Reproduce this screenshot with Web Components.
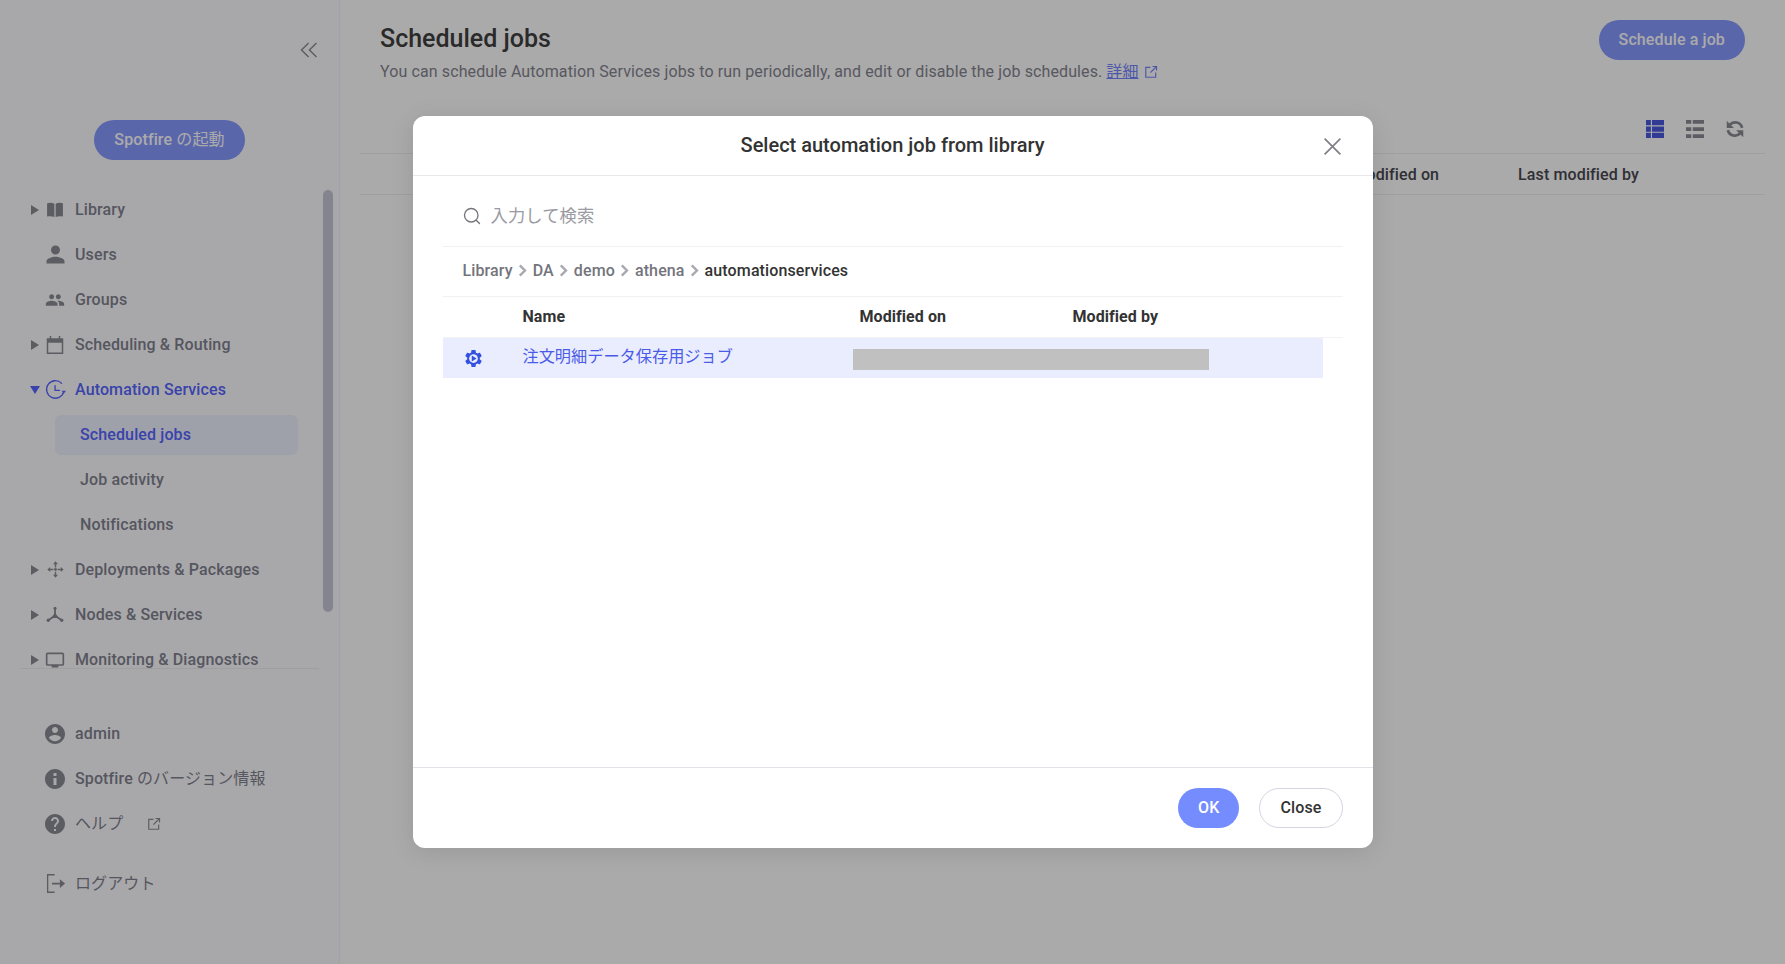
<!DOCTYPE html>
<html lang="ja">
<head>
<meta charset="utf-8">
<title>Scheduled jobs</title>
<style>
  html, body { margin: 0; height: 100%; }
  body {
    font: 16px/20px Roboto, "Noto Sans CJK JP", sans-serif;
    letter-spacing: .12px;
    background: #fff;
    overflow: hidden;
  }
</style>
</head>
<body>
<app-shell>
  <side-bar slot="side"></side-bar>
  <scheduled-jobs slot="main"></scheduled-jobs>
  <job-dialog slot="dialog"></job-dialog>
</app-shell>

<script>
// all the icons, drawn on a 24x24 box
const ICONS = {
  book: '<path d="M2.500 4c3-1 6.200-.9 8.700.5v16c-2.500-1.200-5.700-1.300-8.700-.6zM12.800 4.500c2.500-1.400 5.700-1.500 8.700-.5v15.900c-3-.7-6.200-.6-8.700.6z"/>',
  person: '<path d="M12 12c2.21 0 4-1.79 4-4s-1.79-4-4-4-4 1.79-4 4 1.79 4 4 4zm0 2c-2.67 0-8 1.34-8 4v2h16v-2c0-2.66-5.33-4-8-4z"/>',
  group: '<path d="M16 11c1.66 0 2.99-1.34 2.99-3S17.66 5 16 5s-3 1.34-3 3 1.34 3 3 3zm-8 0c1.66 0 2.99-1.34 2.99-3S9.66 5 8 5 5 6.34 5 8s1.34 3 3 3zm0 2c-2.33 0-7 1.17-7 3.5V19h14v-2.5c0-2.33-4.67-3.5-7-3.5zm8 0c-.29 0-.62.02-.97.05 1.16.84 1.97 1.97 1.97 3.45V19h6v-2.5c0-2.33-4.67-3.5-7-3.5z"/>',
  calendar: '<path d="M5 0h2v3h10V0h2v3h4v21H1V3h4zM3 9v13h18V9z"/>',
  clock: '<g fill="none" stroke="currentColor" stroke-width="1.500" stroke-linecap="round"><path d="M21.500 14.500A10 10 0 1 1 19 5"/><path d="M11.500 7.500v5.500h5"/></g><path d="M19 13.500h5l-2.500 3.200z"/>',
  move: '<path d="M12 .5l3.500 4h-2.500V9h-2V4.500H8.500zM12 23.500l-3.500-4H11V15h2v4.500h2.500zM.5 12l4-3.500V11H9v2H4.500v2.500zM23.500 12l-4 3.500V13H15v-2h4.500V8.500z"/><circle cx="12" cy="12" r="2"/>',
  nodes: '<g stroke="currentColor" stroke-width="2.400" fill="none"><path d="M12 3v9M12 13L3 19M12 13l9 6"/></g><circle cx="12" cy="3" r="2"/><circle cx="3" cy="19" r="2.200"/><circle cx="21" cy="19" r="2.200"/><path d="M12 8.500l5 7.500H7z"/>',
  monitor: '<path d="M3 3h18a2 2 0 0 1 2 2v12a2 2 0 0 1-2 2h-5v2H8v-2H3a2 2 0 0 1-2-2V5a2 2 0 0 1 2-2zm0 2v12h18V5z"/>',
  account: '<path d="M12 2C6.48 2 2 6.48 2 12s4.48 10 10 10 10-4.48 10-10S17.52 2 12 2zm0 3c1.66 0 3 1.34 3 3s-1.34 3-3 3-3-1.34-3-3 1.34-3 3-3zm0 14.2c-2.5 0-4.71-1.28-6-3.22.03-1.99 4-3.08 6-3.08 1.99 0 5.97 1.09 6 3.08-1.29 1.94-3.5 3.22-6 3.22z"/>',
  info: '<path d="M12 2C6.48 2 2 6.48 2 12s4.48 10 10 10 10-4.48 10-10S17.52 2 12 2zm1.500 16h-3v-7h3zm0-9h-3V6h3z"/>',
  help: '<path d="M12 2C6.48 2 2 6.48 2 12s4.48 10 10 10 10-4.48 10-10S17.52 2 12 2zm1 17h-2v-2h2v2zm2.07-7.75l-.9.92C13.45 12.9 13 13.5 13 15h-2v-.5c0-1.1.45-2.1 1.17-2.83l1.24-1.26c.37-.36.59-.86.59-1.41 0-1.1-.9-2-2-2s-2 .9-2 2H8c0-2.21 1.79-4 4-4s4 1.79 4 4c0 .88-.36 1.68-.93 2.25z"/>',
  external: '<path fill="none" stroke="currentColor" stroke-width="2" d="M11 4H3v17h17v-8M11 13L21 3M14.500 2.500H21.500V9.500"/>',
  logout: '<g fill="none" stroke="currentColor" stroke-width="1.500"><path d="M11 2H3v20h8"/></g><path d="M8 11h9V7l6 5-6 5v-4H8z"/>',
  collapse: '<path fill="none" stroke="currentColor" stroke-width="1.700" d="M11.500 3.500L3 12l8.500 8.500M21 3.500L12.500 12 21 20.500"/>',
  gear: '<path d="M19.14 12.94c.04-.3.06-.61.06-.94 0-.32-.02-.64-.07-.94l2.03-1.58c.18-.14.23-.41.12-.61l-1.92-3.32c-.12-.22-.37-.29-.59-.22l-2.39.96c-.5-.38-1.03-.7-1.62-.94l-.36-2.54c-.04-.24-.24-.41-.48-.41h-3.84c-.24 0-.43.17-.47.41l-.36 2.54c-.59.24-1.13.57-1.62.94l-2.39-.96c-.22-.08-.47 0-.59.22L2.74 8.87c-.12.21-.08.47.12.61l2.03 1.58c-.05.3-.09.63-.09.94s.02.64.07.94l-2.03 1.58c-.18.14-.23.41-.12.61l1.92 3.32c.12.22.37.29.59.22l2.39-.96c.5.38 1.03.7 1.62.94l.36 2.54c.05.24.24.41.48.41h3.84c.24 0 .44-.17.47-.41l.36-2.54c.59-.24 1.13-.56 1.62-.94l2.39.96c.22.08.47 0 .59-.22l1.92-3.32c.12-.22.07-.47-.12-.61l-2.01-1.58z"/><circle cx="12" cy="12" r="5" fill="#eaedfd"/><path d="M10 8.700l5.500 3.300-5.500 3.300z"/>',
  search: '<g fill="none" stroke="currentColor" stroke-width="1.800" stroke-linecap="round"><circle cx="11" cy="11" r="9"/><path d="M18 18l4 4"/></g>',
  close: '<path fill="none" stroke="currentColor" stroke-width="2" d="M3 3l18 18M21 3L3 21"/>',
  chevron: '<path fill="none" stroke="currentColor" stroke-width="4.500" d="M7 2.500l9.500 9.500L7 21.500"/>',
  table: '<path d="M0 0h6.500v7H0zM8 0H24v7H8zM0 8.500h6.500v7H0zM8 8.500H24v7H8zM0 17h6.500v7H0zM8 17H24v7H8z"/>',
  list: '<path d="M0 0h7v5H0zM9 0h15v5H9zM0 9.500h7v5H0zM9 9.500h15v5H9zM0 19h7v5H0zM9 19h15v5H9z"/>',
  refresh: '<g fill="none" stroke="currentColor" stroke-width="3.600"><path d="M21.500 10.500A9.500 9.500 0 0 0 5 6.500"/><path d="M2.500 13.500A9.500 9.500 0 0 0 19 17.500"/></g><path d="M1 1v9.500h9.500zM23 23v-9.500h-9.500z"/>'
};

class SpIcon extends HTMLElement {
  connectedCallback() {
    const size = this.getAttribute('size') || 24;
    this.attachShadow({ mode: 'open' }).innerHTML = `
      <style>
        :host { display: inline-flex; align-items: center; justify-content: center; flex: none; }
        svg { display: block; fill: currentColor; flex: none; }
      </style>
      <svg width="${size}" height="${size}" viewBox="0 0 24 24">${ICONS[this.getAttribute('name')] || ''}</svg>`;
  }
}
customElements.define('sp-icon', SpIcon);

class PillButton extends HTMLElement {
  constructor() {
    super();
    this.attachShadow({ mode: 'open' }).innerHTML = `
      <style>
        :host {
          display: inline-flex;
          align-items: center;
          justify-content: center;
          height: 40px;
          padding: 0 20px;
          box-sizing: border-box;
          border-radius: 20px;
          font-weight: 500;
          font-size: 16px;
          white-space: nowrap;
          background: #8799ff;
          color: #fff;
        }
        :host([variant="ok"]) { background: #748cfd; }
        :host([variant="plain"]) {
          background: #fff;
          color: #333;
          border: 1px solid #d3d5e2;
        }
      </style>
      <slot></slot>`;
  }
}
customElements.define('pill-button', PillButton);

class NavItem extends HTMLElement {
  constructor() {
    super();
    const caret = this.getAttribute('caret');
    const icon = this.getAttribute('icon');
    const size = this.getAttribute('icon-size') || 24;
    this.attachShadow({ mode: 'open' }).innerHTML = `
      <style>
        :host {
          display: flex;
          align-items: center;
          height: 45px;
          color: #828290;
          font-weight: 500;
          white-space: nowrap;
        }
        .caret { width: 43px; display: flex; justify-content: flex-end; padding-right: 4px; box-sizing: border-box; flex: none; }
        .caret i { width: 0; height: 0; display: block; }
        .caret.right i { border-left: 8px solid #8a8a95; border-top: 5px solid transparent; border-bottom: 5px solid transparent; }
        .caret.down i { border-top: 8px solid #5765ff; border-left: 5.500px solid transparent; border-right: 5.500px solid transparent; margin-right: -1px; }
        sp-icon { width: 24px; color: #8a8a95; }
        .label { margin-left: 8px; display: flex; align-items: center; }
        :host([current]) { color: #5765ff; }
        :host([current]) sp-icon { color: #5765ff; }
        :host([sub]) { height: 45px; padding-left: 55px; }
        :host([sub]) .box { width: 243px; height: 40px; border-radius: 6px; padding-left: 25px; box-sizing: border-box; display: flex; align-items: center; }
        :host([sub][current]) .box { background: #edf0ff; }
        :host([sub]) .label { margin-left: 0; }
        ::slotted(sp-icon) { margin-left: 24px; color: #8a8a95; }
      </style>
      ${this.hasAttribute('sub')
        ? '<div class="box"><div class="label"><slot></slot></div></div>'
        : `<div class="caret ${caret || ''}"><i></i></div>
           <sp-icon name="${icon}" size="${size}"></sp-icon>
           <div class="label"><slot></slot></div><slot name="after"></slot>`}`;
  }
}
customElements.define('nav-item', NavItem);

class SideBar extends HTMLElement {
  constructor() {
    super();
    this.attachShadow({ mode: 'open' }).innerHTML = `
      <style>
        :host {
          display: block;
          position: relative;
          width: 340px;
          height: 100%;
          box-sizing: border-box;
          background: #fdfdff;
          border-right: 1px solid #f3f3f9;
          padding-top: 38px;
          flex: none;
        }
        .collapse { display: flex; justify-content: flex-end; padding-right: 20px; height: 24px; color: #8a8a95; }
        .launch { display: flex; justify-content: center; margin: 58px 0 27px; }
        .tree { height: 481px; overflow: hidden; }
        .rule { margin: 0 20px; height: 1px; background: #efeff3; }
        .bottom { margin-top: 42px; }
        .logout { margin-top: 15px; }
        .thumb {
          position: absolute;
          left: 323px;
          top: 190px;
          width: 10px;
          height: 422px;
          border-radius: 5px;
          background: #c6c6d6;
        }
        .jp { font-weight: 400; }
      </style>
      <div class="collapse"><sp-icon name="collapse" size="20"></sp-icon></div>
      <div class="launch"><pill-button>Spotfire&nbsp;<span class="jp">の起動</span></pill-button></div>
      <div class="tree">
        <nav-item caret="right" icon="book" icon-size="20">Library</nav-item>
        <nav-item icon="person" icon-size="27">Users</nav-item>
        <nav-item icon="group" icon-size="20">Groups</nav-item>
        <nav-item caret="right" icon="calendar" icon-size="18">Scheduling &amp; Routing</nav-item>
        <nav-item caret="down" icon="clock" icon-size="21" current>Automation Services</nav-item>
        <nav-item sub current>Scheduled jobs</nav-item>
        <nav-item sub>Job activity</nav-item>
        <nav-item sub>Notifications</nav-item>
        <nav-item caret="right" icon="move" icon-size="17">Deployments &amp; Packages</nav-item>
        <nav-item caret="right" icon="nodes" icon-size="18">Nodes &amp; Services</nav-item>
        <nav-item caret="right" icon="monitor" icon-size="20">Monitoring &amp; Diagnostics</nav-item>
      </div>
      <div class="rule"></div>
      <div class="bottom">
        <nav-item icon="account">admin</nav-item>
        <nav-item icon="info">Spotfire&nbsp;<span class="jp">のバージョン情報</span></nav-item>
        <nav-item icon="help"><span class="jp">ヘルプ</span><sp-icon slot="after" name="external" size="14"></sp-icon></nav-item>
        <nav-item class="logout" icon="logout" icon-size="21"><span class="jp">ログアウト</span></nav-item>
      </div>
      <div class="thumb"></div>`;
  }
}
customElements.define('side-bar', SideBar);

class ScheduledJobs extends HTMLElement {
  constructor() {
    super();
    this.attachShadow({ mode: 'open' }).innerHTML = `
      <style>
        :host { display: block; flex: 1; min-width: 0; padding: 0 20px; box-sizing: border-box; }
        .head { display: flex; justify-content: space-between; padding: 20px 20px 0 20px; height: 100px; box-sizing: border-box; }
        h1 { margin: 5px 0 0; font-size: 25px; line-height: 28px; font-weight: 500; letter-spacing: 0; color: #3f3f3f; }
        p { margin: 9px 0 0; color: #858590; line-height: 20px; display: flex; align-items: center; letter-spacing: .11px; }
        a { color: #7584ff; text-decoration: underline; margin-left: 4px; }
        .ext { color: #7584ff; margin-left: 5px; }
        .tools { display: flex; justify-content: flex-end; align-items: flex-start; gap: 22px; height: 54px; padding: 20px 21px 0 0; box-sizing: border-box; border-bottom: 1px solid #efefef; color: #8a8a95; }
        .tools .on { color: #4a58e0; }
        .cols { height: 41px; box-sizing: border-box; border-bottom: 1px solid #efefef; display: flex; align-items: center; padding: 2px 0 0 957px; font-weight: 500; color: #484850; gap: 79px; }
      </style>
      <div class="head">
        <div>
          <h1>Scheduled jobs</h1>
          <p>You can schedule Automation Services jobs to run periodically, and edit or disable the job schedules.<a>詳細</a><sp-icon class="ext" name="external" size="14"></sp-icon></p>
        </div>
        <pill-button>Schedule a job</pill-button>
      </div>
      <div class="tools">
        <sp-icon class="on" name="table" size="18"></sp-icon>
        <sp-icon name="list" size="18"></sp-icon>
        <sp-icon name="refresh" size="18"></sp-icon>
      </div>
      <div class="cols"><span>Last modified on</span><span>Last modified by</span></div>`;
  }
}
customElements.define('scheduled-jobs', ScheduledJobs);

class JobDialog extends HTMLElement {
  constructor() {
    super();
    const crumbs = ['Library', 'DA', 'demo', 'athena'];
    this.attachShadow({ mode: 'open' }).innerHTML = `
      <style>
        :host {
          display: flex;
          flex-direction: column;
          width: 960px;
          height: 732px;
          background: #fff;
          border-radius: 12px;
          box-shadow: 0 4px 24px rgba(0, 0, 0, .1);
          color: #333;
        }
        header {
          position: relative;
          height: 60px;
          box-sizing: border-box;
          flex: none;
          display: flex;
          align-items: center;
          justify-content: center;
          border-bottom: 1px solid #e8e8ec;
          font-size: 20px;
          font-weight: 500;
          letter-spacing: 0;
          padding-bottom: 2px;
          color: #333;
        }
        .x { position: absolute; right: 30px; top: 20px; color: #808088; }
        .body { flex: 1; padding: 0 30px; display: flex; flex-direction: column; }
        .search {
          height: 71px;
          box-sizing: border-box;
          flex: none;
          display: flex;
          align-items: center;
          gap: 10px;
          padding: 9px 0 0 20px;
          border-bottom: 1px solid #f0f0f5;
          color: #9a9aa2;
          font-size: 17.300px;
        }
        .search sp-icon { color: #76767e; }
        .crumbs {
          height: 50px;
          box-sizing: border-box;
          flex: none;
          display: flex;
          align-items: center;
          padding: 0 0 2px 20px;
          border-bottom: 1px solid #f0f0f5;
          color: #74747c;
          font-weight: 500;
        }
        .crumbs sp-icon { color: #a8a8b0; width: 20px; }
        .crumbs b { font-weight: 500; color: #333; }
        .grid { display: grid; grid-template-columns: 80px 337px 213px 1fr; align-items: center; }
        .cols {
          height: 41px;
          box-sizing: border-box;
          flex: none;
          font-weight: 700;
          letter-spacing: .06px;
          color: #333;
          border-bottom: 1px solid #f3f3f6;
        }
        .row {
          position: relative;
          width: 880px;
          height: 40px;
          flex: none;
          background: #eaedfd;
          color: #4a5be8;
          grid-template-columns: 80px 1fr;
        }
        .row span { padding-bottom: 2px; letter-spacing: 0; font-size: 16.200px; }
        .row sp-icon { color: #3350e0; justify-self: start; margin-left: 20px; }
        .mask { position: absolute; left: 410px; top: 11px; width: 356px; height: 21px; background: #c0c0c0; }
        footer {
          height: 81px;
          box-sizing: border-box;
          flex: none;
          border-top: 1px solid #e2e2e8;
          display: flex;
          justify-content: flex-end;
          align-items: center;
          gap: 20px;
          padding: 0 30px;
        }
      </style>
      <header>Select automation job from library<sp-icon class="x" name="close" size="21"></sp-icon></header>
      <div class="body">
        <div class="search"><sp-icon name="search" size="18"></sp-icon><span>入力して検索</span></div>
        <div class="crumbs">
          ${crumbs.map(c => `<span>${c}</span><sp-icon name="chevron" size="13"></sp-icon>`).join('')}
          <b>automationservices</b>
        </div>
        <div class="grid cols"><span></span><span>Name</span><span>Modified on</span><span>Modified by</span></div>
        <div class="grid row">
          <sp-icon name="gear" size="21"></sp-icon><span>注文明細データ保存用ジョブ</span>
          <div class="mask"></div>
        </div>
      </div>
      <footer>
        <pill-button variant="ok">OK</pill-button>
        <pill-button variant="plain">Close</pill-button>
      </footer>`;
  }
}
customElements.define('job-dialog', JobDialog);

class AppShell extends HTMLElement {
  constructor() {
    super();
    this.attachShadow({ mode: 'open' }).innerHTML = `
      <style>
        :host { display: flex; position: relative; width: 100%; height: 100%; }
        .backdrop { position: absolute; inset: 0; background: rgba(0, 0, 0, .333); display: flex; align-items: center; justify-content: center; }
      </style>
      <slot name="side"></slot>
      <slot name="main"></slot>
      <div class="backdrop"><slot name="dialog"></slot></div>`;
  }
}
customElements.define('app-shell', AppShell);
</script>
</body>
</html>
